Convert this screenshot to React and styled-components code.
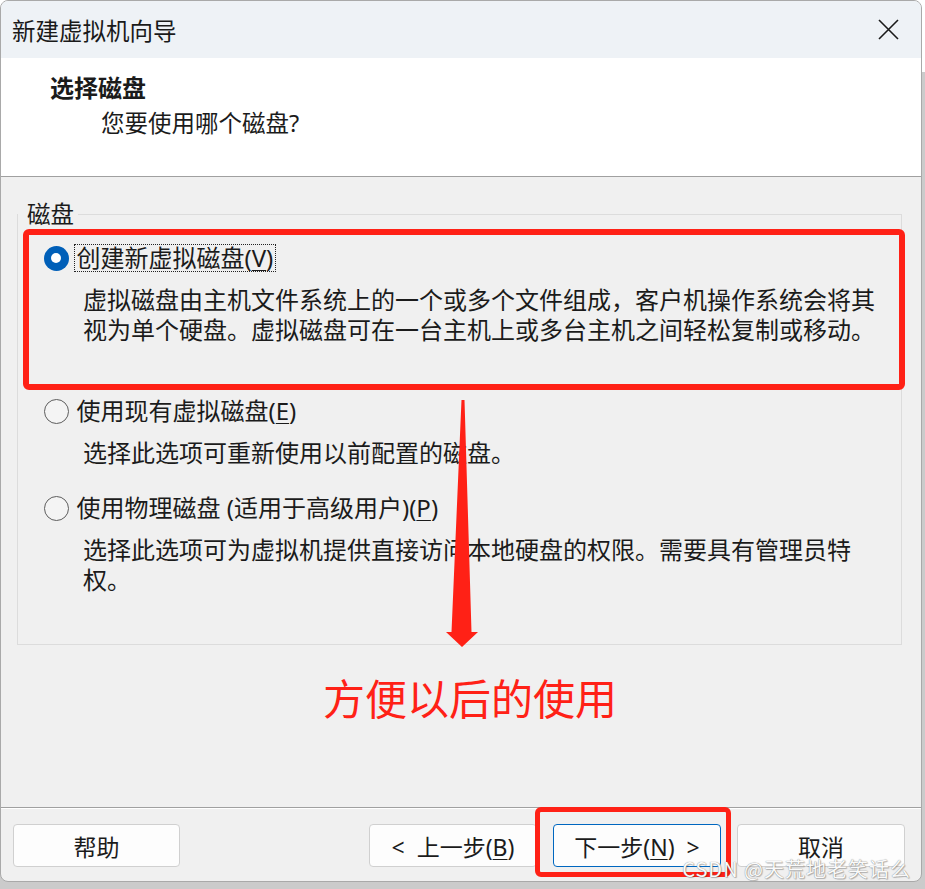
import React from "react";
import styled, { createGlobalStyle } from "styled-components";

// 新建虚拟机向导 - 选择磁盘 这一页，带红色标注

const font = `"Noto Sans", "Noto Sans CJK SC", sans-serif`;
const red = "#ff2116";

const Global = createGlobalStyle`
  * { box-sizing: border-box; }
  html, body { margin: 0; padding: 0; background: #cdcdcd; }
  body { font-family: ${font}; color: #1b1b1b; }
`;

const Page = styled.div`
  width: 925px;
  height: 889px;
  overflow: hidden;
  background: linear-gradient(#ffffff 0 72px, #cbcbcb 72px);
`;

const Window = styled.div`
  position: relative;
  width: 922px;
  height: 882px;
  border: 1px solid #a9a9a9;
  border-radius: 8px;
  overflow: hidden;
  background: #f0f0f0;
  display: flex;
  flex-direction: column;
`;

const TitleBar = styled.div`
  height: 57px;
  flex: none;
  background: #eef2f6;
  display: flex;
  align-items: center;
  justify-content: space-between;
  padding: 0 22px 0 11px;
  font-size: 23.5px;
  color: #1a1a1a;
`;

const Header = styled.div`
  height: 119px;
  flex: none;
  background: #fff;
  border-bottom: 1px solid #a0a0a0;
  padding: 15px 0 0 49px;
`;

const HeaderTitle = styled.div`
  font-size: 24px;
  font-weight: 700;
  line-height: 30px;
`;

const HeaderSub = styled.div`
  margin: 5px 0 0 51px;
  font-size: 23.5px;
  line-height: 30px;
`;

const Body = styled.div`
  height: 631px;
  flex: none;
  border-bottom: 1px solid #a0a0a0;
  padding: 22px 19px 0 16px;
  display: flex;
  flex-direction: column;
`;

const Group = styled.fieldset`
  margin: 0;
  padding: 0 0 49px 0;
  border: 1px solid #dcdcdc;
  min-width: 0;
`;

const Legend = styled.legend`
  padding: 0 4px 0 9px;
  font-size: 23.5px;
  line-height: 30px;
`;

const Highlight = styled.div`
  margin: 0 -4px 0 5px;
  border: 6px solid ${red};
  border-radius: 6px;
  padding: 8px 0 39px 0;
`;

const Option = styled.div`
  padding-left: ${(p) => p.$indent}px;
  margin-top: ${(p) => p.$top || 0}px;
`;

const Row = styled.div`
  display: flex;
  align-items: center;
  height: 30px;
  gap: 5px;
`;

const Radio = styled.span`
  position: relative;
  flex: none;
  width: 25px;
  height: 25px;
  border-radius: 50%;
  background: ${(p) => (p.$checked ? "#005fb8" : "#f4f4f4")};
  border: ${(p) => (p.$checked ? "none" : "1.5px solid #5d5d5d")};

  &::after {
    content: "";
    display: ${(p) => (p.$checked ? "block" : "none")};
    position: absolute;
    left: 7.5px;
    top: 7.5px;
    width: 10px;
    height: 10px;
    border-radius: 50%;
    background: #fff;
  }
`;

const Label = styled.span`
  border: 1px dotted ${(p) => (p.$focus ? "#222" : "transparent")};
  padding: 0 2px;
  font-size: 24px;
  line-height: 26px;
  white-space: nowrap;
`;

const Key = styled.span`
  text-decoration: underline;
  text-underline-offset: 3px;
  text-decoration-thickness: 1px;
`;

const Desc = styled.div`
  margin-top: 12px;
  padding-left: 39.5px;
  font-size: 24px;
  line-height: 30px;
  white-space: nowrap;
`;

const Note = styled.div`
  margin: 24px 0 0 306px;
  font-family: "Noto Sans CJK SC", sans-serif;
  font-size: 42px;
  line-height: 56px;
  color: ${red};
`;

const Footer = styled.div`
  height: 73px;
  flex: none;
  border-top: 1px solid #fff;
  padding: 15px 16px 14px 12px;
  display: flex;
  align-items: flex-start;
  gap: 16px;
`;

const Button = styled.button`
  width: ${(p) => p.$w || 168}px;
  height: 43px;
  margin-right: ${(p) => (p.$push ? "auto" : "0")};
  background: #fdfdfd;
  border: 1px solid ${(p) => (p.$primary ? "#0067c0" : "#d0d0d0")};
  border-radius: 4px;
  font-family: ${font};
  font-size: 23px;
  color: #1b1b1b;
  padding: 0;
  white-space: pre;
`;

const Marked = styled.div`
  position: relative;

  &::after {
    content: "";
    position: absolute;
    left: -18px;
    right: -10px;
    top: -17px;
    bottom: -10px;
    border: 5px solid ${red};
    border-radius: 6px;
  }
`;

const Watermark = styled.div`
  position: absolute;
  right: 10px;
  bottom: 1px;
  font-family: "Noto Sans CJK SC", sans-serif;
  font-size: 20px;
  line-height: 22px;
  letter-spacing: 1px;
  color: #fafafa;
  text-shadow: 0 0 1px #6e6e6e, 1px 1px 1px rgba(0, 0, 0, 0.25);
`;

const Arrow = styled.svg`
  position: absolute;
  left: 439px;
  top: 395px;
  width: 45px;
  height: 255px;
`;

const options = [
  {
    label: "创建新虚拟磁盘",
    key: "V",
    checked: true,
    lines: [
      "虚拟磁盘由主机文件系统上的一个或多个文件组成，客户机操作系统会将其",
      "视为单个硬盘。虚拟磁盘可在一台主机上或多台主机之间轻松复制或移动。",
    ],
  },
  {
    label: "使用现有虚拟磁盘",
    key: "E",
    lines: ["选择此选项可重新使用以前配置的磁盘。"],
  },
  {
    label: "使用物理磁盘 (适用于高级用户)",
    key: "P",
    lines: [
      "选择此选项可为虚拟机提供直接访问本地硬盘的权限。需要具有管理员特",
      "权。",
    ],
  },
];

const DiskOption = ({ opt, indent, top }) => (
  <Option $indent={indent} $top={top}>
    <Row>
      <Radio $checked={opt.checked} />
      <Label $focus={opt.checked}>
        {opt.label}(<Key>{opt.key}</Key>)
      </Label>
    </Row>
    <Desc>
      {opt.lines.map((l) => (
        <div key={l}>{l}</div>
      ))}
    </Desc>
  </Option>
);

const CloseIcon = () => (
  <svg width="21" height="21" viewBox="0 0 21 21">
    <path d="M1 1 L20 20 M20 1 L1 20" stroke="#1a1a1a" strokeWidth="1.6" />
  </svg>
);

export default function App() {
  return (
    <Page>
      <Global />
      <Window>
        <TitleBar>
          <span>新建虚拟机向导</span>
          <CloseIcon />
        </TitleBar>
        <Header>
          <HeaderTitle>选择磁盘</HeaderTitle>
          <HeaderSub>您要使用哪个磁盘?</HeaderSub>
        </Header>
        <Body>
          <Group>
            <Legend>磁盘</Legend>
            <Highlight>
              <DiskOption opt={options[0]} indent={14.5} />
            </Highlight>
            <DiskOption opt={options[1]} indent={25.5} top={6} />
            <DiskOption opt={options[2]} indent={25.5} top={25} />
          </Group>
          <Note>方便以后的使用</Note>
        </Body>
        <Footer>
          <Button $w={167} $push>帮助</Button>
          <Button>
            {"<  上一步("}
            <Key>B</Key>)
          </Button>
          <Marked>
            <Button $primary>
              下一步(<Key>N</Key>
              {")  >"}
            </Button>
          </Marked>
          <Button>取消</Button>
        </Footer>
        <Arrow viewBox="0 0 45 255">
          <polygon
            points="21.5,4 24.5,4 31.5,236 38,236 22,251 6,236 11.5,236"
            fill={red}
          />
        </Arrow>
        <Watermark>CSDN @天荒地老笑话么</Watermark>
      </Window>
    </Page>
  );
}
